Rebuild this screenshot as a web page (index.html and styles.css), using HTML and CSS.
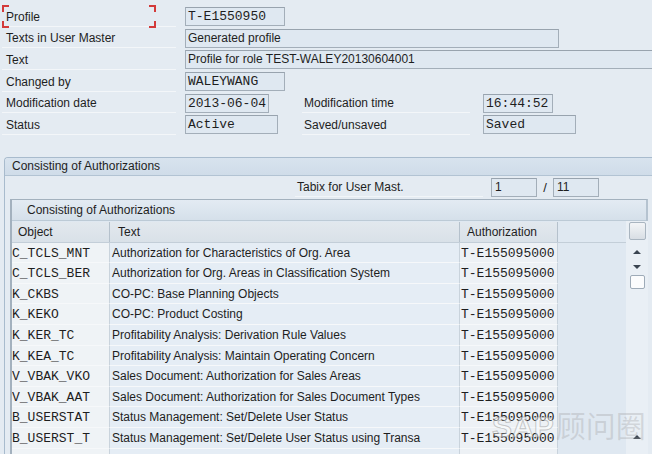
FILE: index.html
```html
<!DOCTYPE html>
<html>
<head>
<meta charset="utf-8">
<link rel="stylesheet" href="styles.css">
</head>
<body>
<div class="head">
  <div class="row">
    <div class="lbl focus">Profile<span class="corner tl"></span><span class="corner tr"></span><span class="corner bl"></span><span class="corner br"></span></div>
    <div class="fld mono w100">T-E1550950</div>
  </div>
  <div class="row">
    <div class="lbl">Texts in User Master</div>
    <div class="fld w374">Generated profile</div>
  </div>
  <div class="row">
    <div class="lbl">Text</div>
    <div class="fld w470">Profile for role TEST-WALEY20130604001</div>
  </div>
  <div class="row">
    <div class="lbl">Changed by</div>
    <div class="fld mono w100">WALEYWANG</div>
  </div>
  <div class="row">
    <div class="lbl">Modification date</div>
    <div class="cell2"><div class="fld mono w83">2013-06-04</div></div>
    <div class="lbl2">Modification time</div>
    <div class="fld mono w69">16:44:52</div>
  </div>
  <div class="row">
    <div class="lbl">Status</div>
    <div class="cell2"><div class="fld mono w92">Active</div></div>
    <div class="lbl2">Saved/unsaved</div>
    <div class="fld mono w92">Saved</div>
  </div>
</div>

<div class="group">
  <div class="ghead">Consisting of Authorizations</div>
  <div class="tabix">
    <div class="tlbl">Tabix for User Mast.</div>
    <div class="fld tin">1</div>
    <span class="slash">/</span>
    <div class="fld tin">11</div>
  </div>
  <div class="tc">
    <div class="tctitle">Consisting of Authorizations</div>
    <div class="tcbody">
      <div class="grid">
        <div class="hrow">
          <div class="hc c-obj">Object</div>
          <div class="hc c-txt">Text</div>
          <div class="hc c-auth">Authorization</div>
        </div>
        <div class="drow"><div class="dc c-obj mono">C_TCLS_MNT</div><div class="dc c-txt">Authorization for Characteristics of Org. Area</div><div class="dc c-auth mono">T-E155095000</div></div>
        <div class="drow"><div class="dc c-obj mono">C_TCLS_BER</div><div class="dc c-txt">Authorization for Org. Areas in Classification System</div><div class="dc c-auth mono">T-E155095000</div></div>
        <div class="drow"><div class="dc c-obj mono">K_CKBS</div><div class="dc c-txt">CO-PC: Base Planning Objects</div><div class="dc c-auth mono">T-E155095000</div></div>
        <div class="drow"><div class="dc c-obj mono">K_KEKO</div><div class="dc c-txt">CO-PC: Product Costing</div><div class="dc c-auth mono">T-E155095000</div></div>
        <div class="drow"><div class="dc c-obj mono">K_KER_TC</div><div class="dc c-txt">Profitability Analysis: Derivation Rule Values</div><div class="dc c-auth mono">T-E155095000</div></div>
        <div class="drow"><div class="dc c-obj mono">K_KEA_TC</div><div class="dc c-txt">Profitability Analysis: Maintain Operating Concern</div><div class="dc c-auth mono">T-E155095000</div></div>
        <div class="drow"><div class="dc c-obj mono">V_VBAK_VKO</div><div class="dc c-txt">Sales Document: Authorization for Sales Areas</div><div class="dc c-auth mono">T-E155095000</div></div>
        <div class="drow"><div class="dc c-obj mono">V_VBAK_AAT</div><div class="dc c-txt">Sales Document: Authorization for Sales Document Types</div><div class="dc c-auth mono">T-E155095000</div></div>
        <div class="drow"><div class="dc c-obj mono">B_USERSTAT</div><div class="dc c-txt">Status Management: Set/Delete User Status</div><div class="dc c-auth mono">T-E155095000</div></div>
        <div class="drow"><div class="dc c-obj mono">B_USERST_T</div><div class="dc c-txt">Status Management: Set/Delete User Status using Transa</div><div class="dc c-auth mono">T-E155095000</div></div>
        <div class="drow"><div class="dc c-obj mono">S_TCODE</div><div class="dc c-txt">Transaction Code Check at Transaction Start</div><div class="dc c-auth mono">T-E155095000</div></div>
      </div>
      <div class="sbar">
        <div class="sbtn"></div>
        <div class="arr up"></div>
        <div class="arr down"></div>
        <div class="thumb"></div>
        <div class="spacer"></div>
        <div class="arr up small"></div>
      </div>
    </div>
  </div>
</div>
<div class="wm"><span class="wm-sap">SAP</span>顾问圈</div>
</body>
</html>
```
FILE: styles.css
```css
html, body {
  margin: 0;
  padding: 0;
}
body {
  width: 652px;
  height: 454px;
  overflow: hidden;
  background: #e4ebf2;
  font-family: "Liberation Sans", Arial, sans-serif;
  font-size: 12px;
  color: #1e1e1e;
  position: relative;
}
.mono {
  font-family: "Liberation Mono", "Courier New", monospace;
  font-size: 13px;
}
.head {
  padding: 6px 0 0 2px;
}
.row {
  display: flex;
  align-items: center;
  height: 21.6px;
  white-space: nowrap;
}
.lbl {
  position: relative;
  width: 174px;
  flex: none;
  box-sizing: border-box;
  padding-left: 4px;
  height: 20px;
  line-height: 20px;
  border-bottom: 1px solid #f3f6f9;
  margin-right: 9px;
}
.cell2 {
  width: 117px;
  flex: none;
}
.lbl2 {
  width: 168px;
  flex: none;
  box-sizing: border-box;
  padding-left: 2px;
  height: 20px;
  line-height: 20px;
  border-bottom: 1px solid #f3f6f9;
  margin-right: 13px;
}
.fld {
  flex: none;
  box-sizing: border-box;
  height: 19px;
  line-height: 17px;
  border: 1px solid #a3aeb9;
  border-top-color: #98a3ae;
  background: #dfe8f1;
  padding: 0 2px;
  overflow: hidden;
  white-space: nowrap;
}
.w100 { width: 100px; }
.w374 { width: 374px; }
.w470 { width: 480px; }
.w83 { width: 84px; }
.w69 { width: 70px; }
.w92 { width: 93px; }

.corner {
  position: absolute;
  width: 5px;
  height: 5px;
  border-color: #d33a3a;
  border-style: solid;
  border-width: 0;
}
.corner.tl { left: 0; top: -2px; border-top-width: 2px; border-left-width: 2px; }
.corner.tr { left: 147px; top: -2px; border-top-width: 2px; border-right-width: 2px; }
.corner.bl { left: 0; bottom: -2px; border-bottom-width: 2px; border-left-width: 2px; }
.corner.br { left: 147px; bottom: -2px; border-bottom-width: 2px; border-right-width: 2px; }

.group {
  margin: 21px 0 0 4px;
  border: 1px solid #a8bbcd;
  border-right: none;
  border-bottom: none;
  border-radius: 4px 0 0 0;
  height: 400px;
}
.ghead {
  height: 17px;
  line-height: 17px;
  padding-left: 7px;
  background: linear-gradient(#d8e3ee, #cfdce9);
  border-bottom: 1px solid #b2c3d3;
  border-radius: 3px 0 0 0;
}
.tabix {
  display: flex;
  align-items: center;
  height: 23px;
  white-space: nowrap;
}
.tlbl {
  margin-left: 290px;
  width: 188px;
  box-sizing: border-box;
  padding-left: 2px;
  height: 19px;
  line-height: 19px;
  border-bottom: 1px solid #f1f5f8;
  margin-right: 8px;
}
.tin {
  width: 46px;
  height: 19px;
  line-height: 17px;
  padding-left: 3px;
}
.slash {
  width: 16px;
  text-align: center;
  font-size: 13px;
}
.tc {
  margin-left: 5px;
  width: 638px;
  box-sizing: border-box;
  border-left: 2px solid #a3b1be;
  border-top: 1px solid #a3b1be;
  border-right: 2px solid #b5c3d0;
  height: 260px;
}
.tctitle {
  height: 20px;
  line-height: 20px;
  padding-left: 15px;
  background: linear-gradient(#e3ebf3, #d5e0ea);
  border-bottom: 1px solid #bccad6;
}
.tcbody {
  display: flex;
  background: #dfe8f1;
}
.grid {
  width: 614px;
  flex: none;
}
.hrow {
  display: flex;
  height: 22px;
  box-sizing: border-box;
  padding-top: 1px;
  border-bottom: 1px solid #c3ced8;
}
.hc {
  box-sizing: border-box;
  height: 20px;
  line-height: 20px;
  background: linear-gradient(#e2e8ee, #d9e1e8);
  border-right: 1px solid #b5c1cc;
  white-space: nowrap;
}
.c-obj { width: 98px; flex: none; }
.c-txt { width: 350px; flex: none; }
.c-auth { width: 98px; flex: none; }
.hc.c-obj { padding-left: 6px; }
.hc.c-txt { padding-left: 8px; }
.hc.c-auth { padding-left: 7px; }
.drow {
  display: flex;
  height: 20.6px;
  white-space: nowrap;
}
.dc {
  box-sizing: border-box;
  height: 100%;
  line-height: 21px;
  padding-left: 1px;
  overflow: hidden;
  border-bottom: 1px solid #f6f8fa;
  border-right: 1px solid #c9d3dc;
}
.dc.c-obj { background: #eff3f6; padding-left: 0; }
.dc.c-txt { background: #e5edf5; padding-left: 2px; }
.dc.c-auth { background: #edf1f5; }

.sbar {
  width: 22px;
  flex: none;
  background: #e9eff5;
  display: flex;
  flex-direction: column;
  align-items: center;
  height: 240px;
}
.sbtn {
  margin-top: 1px;
  width: 17px;
  height: 18px;
  box-sizing: border-box;
  border: 1px solid #a9b5c0;
  border-radius: 2px;
  background: linear-gradient(#f3f5f7, #d8dee4);
}
.arr {
  width: 0;
  height: 0;
  border-left: 4px solid transparent;
  border-right: 4px solid transparent;
}
.arr.up {
  margin-top: 10px;
  border-bottom: 4px solid #3a4450;
}
.arr.down {
  margin-top: 11px;
  border-top: 4px solid #3a4450;
}
.thumb {
  margin-top: 6px;
  width: 15px;
  height: 14px;
  box-sizing: border-box;
  border: 1px solid #9eabb8;
  border-radius: 2px;
  background: #fbfcfd;
}
.spacer {
  flex: 1;
}
.arr.up.small {
  margin-top: 0;
  margin-bottom: 22px;
}

.wm {
  position: absolute;
  left: 492px;
  top: 404px;
  font-family: "Noto Sans CJK SC", sans-serif;
  font-size: 30px;
  line-height: 40px;
  color: rgba(150, 150, 150, 0.28);
  white-space: nowrap;
  pointer-events: none;
}
.wm-sap {
  font-family: "Liberation Sans", Arial, sans-serif;
  font-weight: bold;
  color: rgba(255, 255, 255, 0.45);
  -webkit-text-stroke: 1px rgba(140, 140, 140, 0.45);
  margin-right: 2px;
}
```
